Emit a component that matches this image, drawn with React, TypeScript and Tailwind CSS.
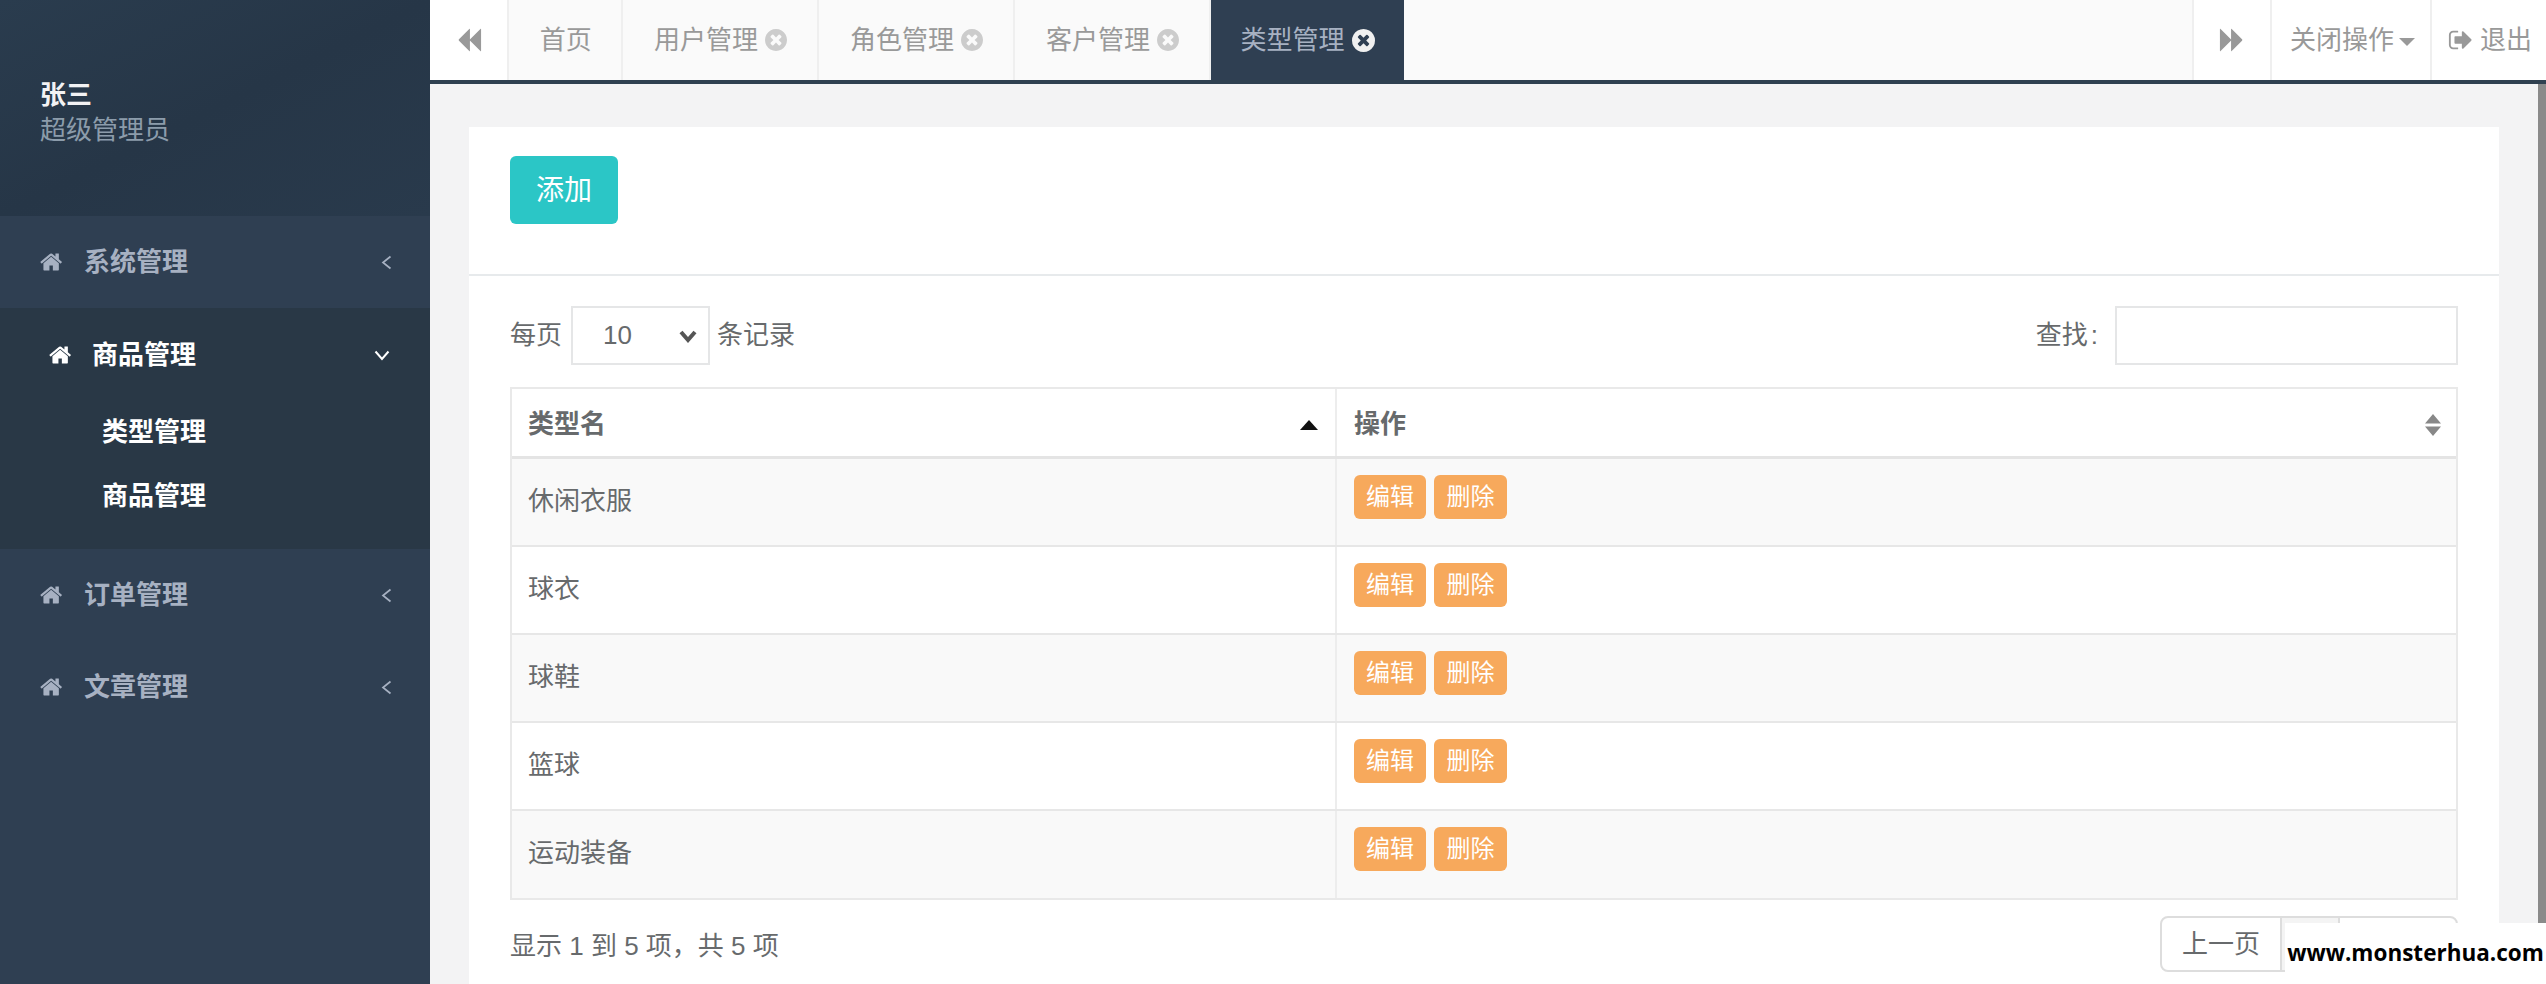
const rows = ['休闲衣服', '球衣', '球鞋', '篮球', '运动装备'];

const tabs = ['用户管理', '角色管理', '客户管理'];

function HomeIcon({ className }: { className: string }) {
  return (
    <svg className={className} viewBox="0 0 1792 1792" fill="currentColor">
      <path d="M1408 992v480q0 26-19 45t-45 19h-384v-384h-256v384h-384q-26 0-45-19t-19-45v-480q0-1 .5-3t.5-3l575-474 575 474q1 2 1 6zm223-69l-62 74q-8 9-21 11h-3q-13 0-21-7l-692-577-692 577q-12 8-24 7-13-2-21-11l-62-74q-8-10-7-23.500t11-21.500l719-599q32-26 76-26t76 26l244 204v-195q0-14 9-23t23-9h192q14 0 23 9t9 23v408l219 182q10 8 11 21.500t-7 23.500z" />
    </svg>
  );
}

function CloseIcon({ className }: { className: string }) {
  return (
    <svg className={className} viewBox="128 128 1536 1536" fill="currentColor">
      <path d="M1277 1122q0-26-19-45l-181-181 181-181q19-19 19-45 0-27-19-46l-90-90q-19-19-46-19-26 0-45 19l-181 181-181-181q-19-19-45-19-27 0-46 19l-90 90q-19 19-19 46 0 26 19 45l181 181-181 181q-19 19-19 45 0 27 19 46l90 90q19 19 46 19 26 0 45-19l181-181 181 181q19 19 45 19 27 0 46-19l90-90q19-19 19-46zm387-226q0 209-103 385.500t-279.500 279.500-385.500 103-385.500-103-279.500-279.500-103-385.500 103-385.500 279.500-279.500 385.500-103 385.500 103 279.500 279.500 103 385.500z" />
    </svg>
  );
}

function BackwardIcon({ className }: { className: string }) {
  return (
    <svg className={className} viewBox="0 0 1792 1792" fill="currentColor">
      <path d="M1683 141q19-19 32-13t13 32v1472q0 26-13 32t-32-13l-710-710q-9-9-13-19v710q0 26-13 32t-32-13l-710-710q-19-19-19-45t19-45l710-710q19-19 32-13t13 32v710q4-10 13-19z" />
    </svg>
  );
}

function SignOutIcon({ className }: { className: string }) {
  return (
    <svg className={className} viewBox="0 0 1664 1792" fill="currentColor">
      <path d="M704 1440q0 4 1 20t.5 26.500-3 23.500-10 19.500-20.500 6.500h-320q-119 0-203.500-84.500t-84.500-203.500v-704q0-119 84.500-203.500t203.500-84.500h320q13 0 22.500 9.500t9.500 22.500q0 4 1 20t.5 26.500-3 23.500-10 19.500-20.500 6.500h-320q-66 0-113 47t-47 113v704q0 66 47 113t113 47h312l11.500 1 11.500 3 8 5.500 7 9 2 13.500zm928-544q0 26-19 45l-544 544q-19 19-45 19t-45-19-19-45v-288h-448q-26 0-45-19t-19-45v-384q0-26 19-45t45-19h448v-288q0-26 19-45t45-19 45 19l544 544q19 19 19 45z" />
    </svg>
  );
}

function MenuRow({ label }: { label: string }) {
  return (
    <div className="flex h-[92px] items-center bg-[#2f3f52] pl-[40px] pr-[38px] text-[#a7b1c2]">
      <HomeIcon className="h-[24px] w-[24px]" />
      <span className="ml-[20px] flex-1 text-[26px] font-bold">{label}</span>
      <svg className="h-[15px] w-[11px]" viewBox="0 0 11 15" fill="none" stroke="currentColor" strokeWidth="1.7">
        <path d="M9.500 1.500L2 7.500l7.500 6" />
      </svg>
    </div>
  );
}

function Sidebar() {
  return (
    <div className="flex w-[430px] shrink-0 flex-col bg-[#2f3f52]">
      <div className="flex h-[216px] flex-col bg-gradient-to-br from-[#2a3c4e] via-[#263647] to-[#293a4c] pl-[40px] pt-[78px] leading-[35px]">
        <span className="text-[26px] font-bold text-[#f2f2f4]">张三</span>
        <span className="text-[26px] text-[#8c9cab]">超级管理员</span>
      </div>
      <MenuRow label="系统管理" />
      <div className="flex h-[241px] flex-col bg-[#293846] text-white">
        <div className="flex h-[94px] items-center pl-[49px] pr-[40px]">
          <HomeIcon className="h-[24px] w-[24px]" />
          <span className="ml-[19px] flex-1 text-[26px] font-bold">商品管理</span>
          <svg className="h-[11px] w-[16px]" viewBox="0 0 16 11" fill="none" stroke="currentColor" strokeWidth="2">
            <path d="M1.500 1.500L8 9l6.500-7.500" />
          </svg>
        </div>
        <div className="flex flex-col gap-[28px] pl-[102px] pt-[12px] text-[26px] font-bold leading-[36px]">
          <span>类型管理</span>
          <span>商品管理</span>
        </div>
      </div>
      <MenuRow label="订单管理" />
      <MenuRow label="文章管理" />
    </div>
  );
}

function TopBar() {
  return (
    <div className="flex h-[84px] shrink-0 border-b-[4px] border-[#2f4050] bg-white text-[26px] text-[#999999]">
      <div className="flex w-[79px] items-center justify-center border-r-[2px] border-[#efefef]">
        <BackwardIcon className="h-[26px] w-[26px]" />
      </div>
      <div className="flex flex-1 bg-[#fafafa]">
        <div className="flex w-[113.500px] items-center justify-center border-r-[2px] border-[#efefef] pl-[2px]">首页</div>
        {tabs.map((tab) => (
          <div key={tab} className="flex w-[196px] items-center border-r-[2px] border-[#efefef] pl-[31.500px]">
            <span>{tab}</span>
            <CloseIcon className="ml-[7px] h-[22px] w-[22px] text-[#cccccc]" />
          </div>
        ))}
        <div className="flex w-[193.500px] items-center bg-[#2f3f52] pl-[30px] text-[#a7b1c2]">
          <span>类型管理</span>
          <CloseIcon className="ml-[7px] h-[23px] w-[23px] text-[#f0f0f0]" />
        </div>
      </div>
      <div className="flex w-[80px] items-center justify-center border-x-[2px] border-[#efefef]">
        <BackwardIcon className="h-[26px] w-[26px] -scale-x-100" />
      </div>
      <div className="flex w-[160px] items-center border-r-[2px] border-[#efefef] pl-[18px]">
        <span>关闭操作</span>
        <span className="ml-[5px] mt-[4px] border-x-[8px] border-t-[8px] border-x-transparent border-t-[#999999]" />
      </div>
      <div className="flex w-[114px] items-center pl-[16px]">
        <SignOutIcon className="h-[26px] w-[24px]" />
        <span className="ml-[8px]">退出</span>
      </div>
    </div>
  );
}

function SortUpIcon() {
  return (
    <svg className="h-[12px] w-[20px] text-[#111111]" viewBox="0 0 20 12" fill="currentColor">
      <path d="M10 1l9 10H1z" />
    </svg>
  );
}

function SortBothIcon() {
  return (
    <svg className="h-[24px] w-[18px] text-[#888888]" viewBox="0 0 18 24" fill="currentColor">
      <path d="M9 1l8 9.500H1zM9 23l-8-9.500h16z" />
    </svg>
  );
}

function DataTable() {
  return (
    <div className="mt-[22px] border-[2px] border-[#e9e9e9] text-[#676a6c]">
      <div className="flex h-[70px] border-b-[3px] border-[#e4e4e4] text-[26px] font-bold">
        <div className="flex w-[825px] items-center justify-between border-r-[2px] border-[#ededed] px-[16px] pt-[4px]">
          <span>类型名</span>
          <SortUpIcon />
        </div>
        <div className="flex flex-1 items-center justify-between pl-[17px] pr-[14px] pt-[4px]">
          <span>操作</span>
          <SortBothIcon />
        </div>
      </div>
      {rows.map((row, i) => (
        <div
          key={row}
          className={`flex h-[88px] border-b-[2px] border-[#e7e7e7] text-[26px] last:h-[87px] last:border-b-0 ${
            i % 2 === 0 ? 'bg-[#f9f9f9]' : 'bg-white'
          }`}
        >
          <div className="flex w-[825px] items-center border-r-[2px] border-[#ededed] pb-[2px] pl-[16px]">{row}</div>
          <div className="flex flex-1 gap-[8px] pl-[17px] pt-[16px]">
            <button className="h-[44px] w-[72px] rounded-[6px] bg-[#f7a95c] text-[24px] text-white">编辑</button>
            <button className="h-[44px] w-[73px] rounded-[6px] bg-[#f7a95c] text-[24px] text-white">删除</button>
          </div>
        </div>
      ))}
    </div>
  );
}

export default function App() {
  return (
    <div className="relative flex h-[984px] overflow-hidden bg-[#f3f3f4] font-['Liberation_Sans','Noto_Sans_CJK_SC',sans-serif] text-[#676a6c]">
      <Sidebar />
      <div className="flex min-w-0 flex-1 flex-col">
        <TopBar />
        <div className="flex flex-1">
          <div className="flex-1 px-[39px] pt-[43px]">
            <div className="h-full bg-white">
              <div className="h-[149px] border-b-[2px] border-[#e7eaec] px-[41px] pt-[29px]">
                <button className="h-[68px] w-[108px] rounded-[6px] bg-[#2bc6c6] pt-[2px] text-[28px] text-white">添加</button>
              </div>
              <div className="px-[41px] pt-[30px]">
                <div className="flex h-[59px] items-center text-[26px]">
                  <span>每页</span>
                  <div className="ml-[9px] flex h-[59px] w-[139px] items-center border-[2px] border-[#e5e6e7] pl-[30px] pr-[11px]">
                    <span className="flex-1 font-normal">10</span>
                    <svg className="h-[14px] w-[18px] text-[#555555]" viewBox="0 0 18 14" fill="none" stroke="currentColor" strokeWidth="4">
                      <path d="M2 3l7 8 7-8" />
                    </svg>
                  </div>
                  <span className="ml-[7px] flex-1">条记录</span>
                  <span>查找<span className="ml-[3px]">:</span></span>
                  <div className="ml-[17px] h-[59px] w-[343px] border-[2px] border-[#e5e6e7] bg-white" />
                </div>
                <DataTable />
                <div className="mt-[16px] flex items-start justify-between">
                  <span className="pt-[11px] text-[26px]">显示 1 到 5 项，共 5 项</span>
                  <div className="flex h-[56px] text-[26px]">
                    <div className="flex w-[122px] items-center justify-center rounded-l-[8px] border-[2px] border-[#dddddd]">上一页</div>
                    <div className="w-[56px] border-y-[2px] border-[#dddddd] bg-[#f4f4f4]" />
                    <div className="w-[120px] rounded-r-[8px] border-[2px] border-[#dddddd]" />
                  </div>
                </div>
              </div>
            </div>
          </div>
          <div className="w-[8px] bg-[#8a8a8a]" />
        </div>
      </div>
      <div className="absolute bottom-0 right-0 flex h-[61px] w-[261px] items-center justify-center bg-white pb-[2px] font-['Open_Sans',sans-serif] text-[22.500px] font-bold text-black">
        www.monsterhua.com
      </div>
    </div>
  );
}
